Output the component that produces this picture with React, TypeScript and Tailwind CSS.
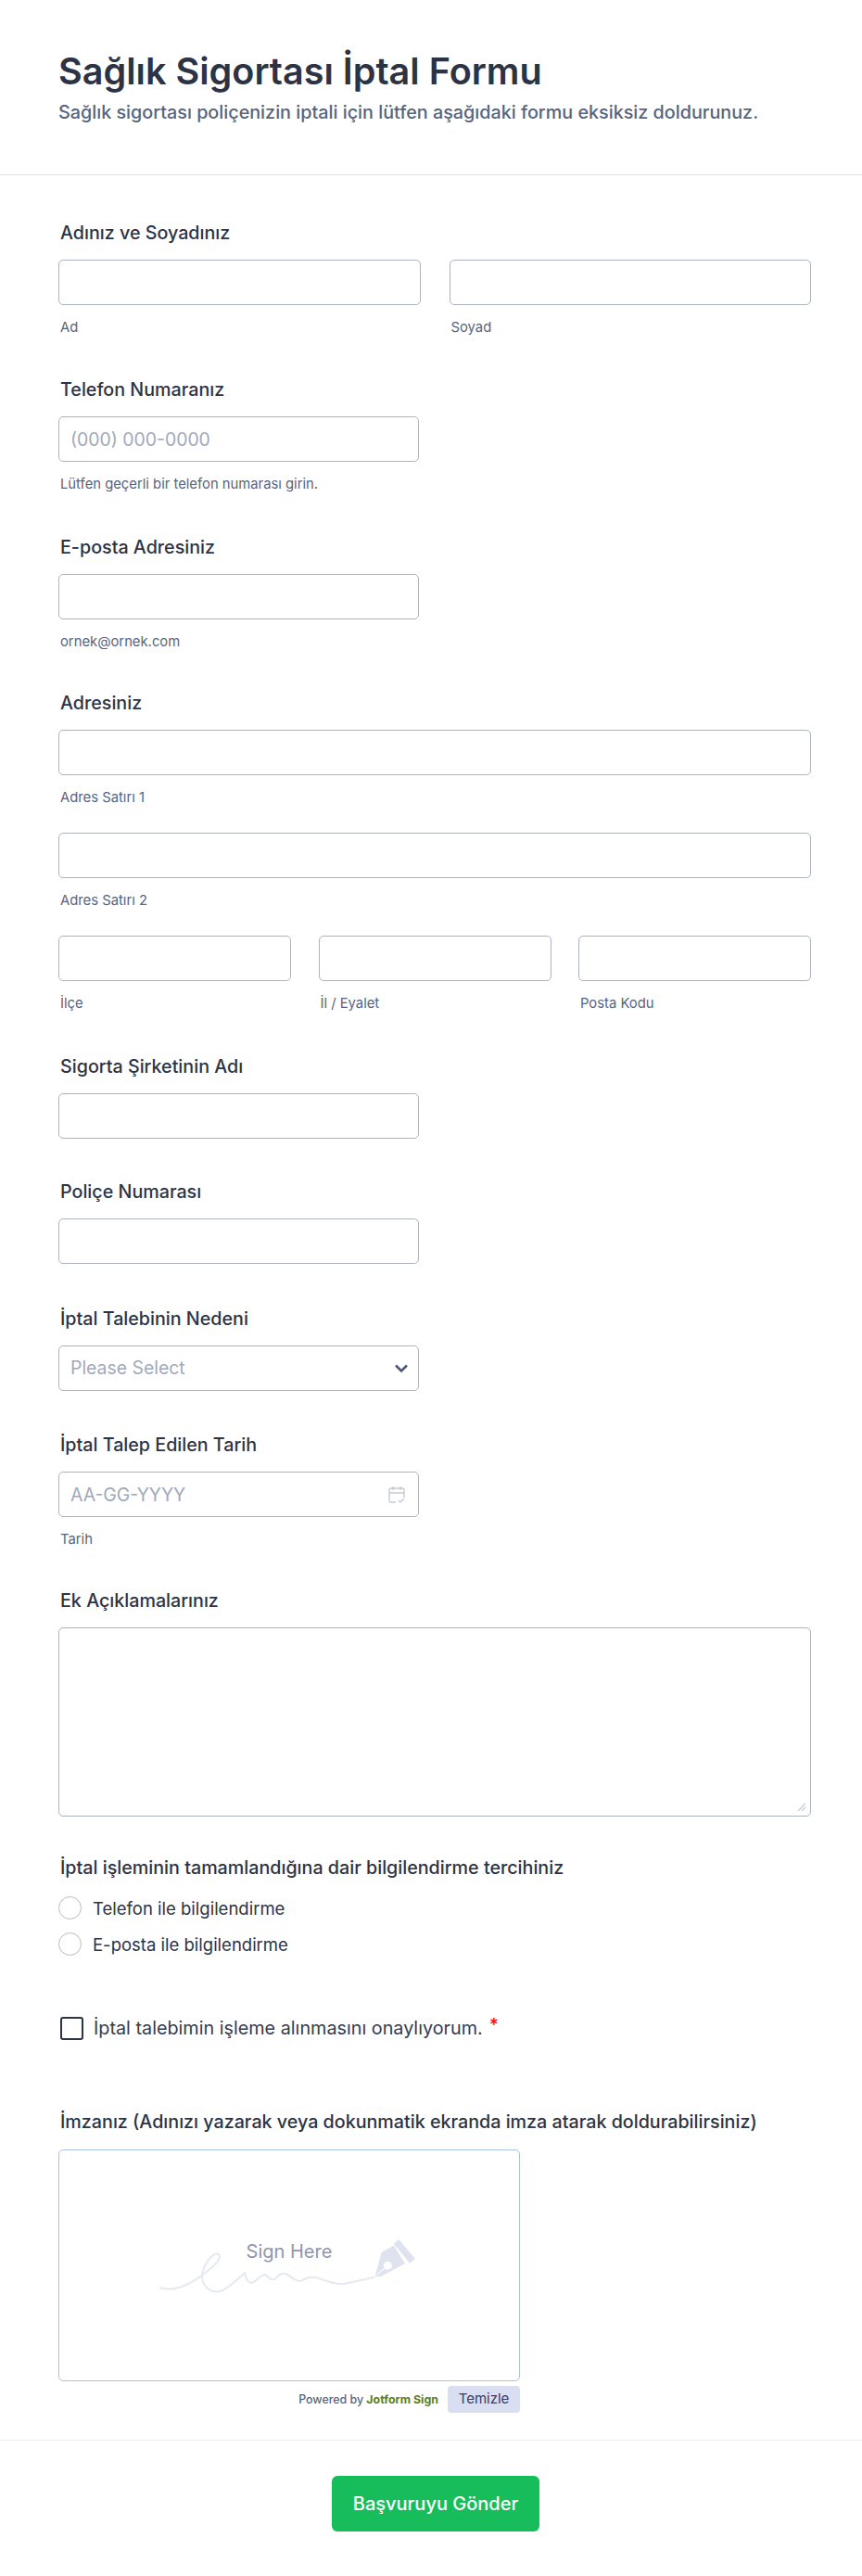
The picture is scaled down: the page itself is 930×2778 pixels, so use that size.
const labelCls = "block pl-[2px] text-[19.7px] leading-[20px] font-medium text-[#2c3345]";
const inputCls = "block h-[49px] w-full rounded-[5px] border border-[#aeb3c2] bg-white px-3 text-[19.4px] text-[#2c3345] placeholder:text-[#a0a9bb]";
const subCls = "mt-[15px] block pl-[2px] text-[14.8px] leading-[18px] text-[#57647e]";

function Label({ children }: { children: React.ReactNode }) {
  return <label className={labelCls}>{children}</label>;
}

function Sub({ children }: { children: React.ReactNode }) {
  return <span className={subCls}>{children}</span>;
}

function Input({ placeholder }: { placeholder?: string }) {
  return <input className={inputCls} placeholder={placeholder} />;
}

function Radio({ text }: { text: string }) {
  return (
    <div className="flex h-[39px] items-center gap-[12px]">
      <span className="h-[25px] w-[25px] rounded-full border border-[#b8bcc8] bg-white" />
      <span className="text-[18.5px] leading-[20px] text-[#2c3345]">{text}</span>
    </div>
  );
}

export default function App() {
  return (
    <div className="min-h-[2778px] w-[930px] bg-white font-['Inter',sans-serif] text-[#2c3345]">
      <header className="h-[189px] border-b border-[#dfe1e9] pl-[63px] pt-[52px]">
        <h1 className="text-[39.6px] leading-[50px] font-semibold text-[#2c3345]">Sağlık Sigortası İptal Formu</h1>
        <p className="mt-[7px] text-[19.75px] leading-[24px] font-medium text-[#57647e]">
          Sağlık sigortası poliçenizin iptali için lütfen aşağıdaki formu eksiksiz doldurunuz.
        </p>
      </header>

      <main className="pl-[63px] pr-[55px] pt-[52px]">
        <section>
          <Label>Adınız ve Soyadınız</Label>
          <div className="mt-[19px] grid grid-cols-2 gap-[31px]">
            <div>
              <Input />
              <Sub>Ad</Sub>
            </div>
            <div>
              <Input />
              <Sub>Soyad</Sub>
            </div>
          </div>
        </section>

        <section className="mt-[48px] w-[389px]">
          <Label>Telefon Numaranız</Label>
          <div className="mt-[19px]">
            <Input placeholder="(000) 000-0000" />
            <Sub>Lütfen geçerli bir telefon numarası girin.</Sub>
          </div>
        </section>

        <section className="mt-[49px] w-[389px]">
          <Label>E-posta Adresiniz</Label>
          <div className="mt-[19px]">
            <Input />
            <Sub>ornek@ornek.com</Sub>
          </div>
        </section>

        <section className="mt-[47px]">
          <Label>Adresiniz</Label>
          <div className="mt-[19px]">
            <Input />
            <Sub>Adres Satırı 1</Sub>
          </div>
          <div className="mt-[29px]">
            <Input />
            <Sub>Adres Satırı 2</Sub>
          </div>
          <div className="mt-[29px] grid grid-cols-3 gap-[29.5px]">
            <div>
              <Input />
              <Sub>İlçe</Sub>
            </div>
            <div>
              <Input />
              <Sub>İl / Eyalet</Sub>
            </div>
            <div>
              <Input />
              <Sub>Posta Kodu</Sub>
            </div>
          </div>
        </section>

        <section className="mt-[49px] w-[389px]">
          <Label>Sigorta Şirketinin Adı</Label>
          <div className="mt-[19px]">
            <Input />
          </div>
        </section>

        <section className="mt-[47px] w-[389px]">
          <Label>Poliçe Numarası</Label>
          <div className="mt-[19px]">
            <Input />
          </div>
        </section>

        <section className="mt-[49px] w-[389px]">
          <Label>İptal Talebinin Nedeni</Label>
          <div className="relative mt-[19px]">
            <div className="flex h-[49px] items-center rounded-[5px] border border-[#aeb3c2] bg-white px-3 text-[19.4px] text-[#a0a9bb]">
              Please Select
            </div>
            <svg className="absolute top-[20px] right-[12px]" width="14" height="10" viewBox="0 0 14 10" fill="none">
              <path d="M1 1.5 7 7.5 13 1.5" stroke="#4b5675" strokeWidth="2.5" />
            </svg>
          </div>
        </section>

        <section className="mt-[48px] w-[389px]">
          <Label>İptal Talep Edilen Tarih</Label>
          <div className="relative mt-[19px]">
            <Input placeholder="AA-GG-YYYY" />
            <svg className="absolute top-[15px] right-[15px]" width="18" height="20" viewBox="0 0 18 20" fill="none" stroke="#c3cad8" strokeWidth="1.4">
              <path d="M8 18H3a2 2 0 0 1-2-2V5a2 2 0 0 1 2-2h12a2 2 0 0 1 2 2v8" />
              <path d="M1 8h16M5 1v4M13 1v4" />
              <path d="m11 16 2 2 4-4" />
            </svg>
          </div>
          <Sub>Tarih</Sub>
        </section>

        <section className="mt-[47px]">
          <Label>Ek Açıklamalarınız</Label>
          <div className="relative mt-[19px]">
            <textarea className="block h-[204px] w-full resize-none rounded-[5px] border border-[#aeb3c2] bg-white" />
            <svg className="absolute right-[6px] bottom-[6px]" width="9" height="9" viewBox="0 0 9 9" fill="none" stroke="#c3c7d1" strokeWidth="1.2">
              <path d="M1 9 9 1M5 9 9 5" />
            </svg>
          </div>
        </section>

        <section className="mt-[45px]">
          <Label>İptal işleminin tamamlandığına dair bilgilendirme tercihiniz</Label>
          <div className="mt-[14px]">
            <Radio text="Telefon ile bilgilendirme" />
            <Radio text="E-posta ile bilgilendirme" />
          </div>
        </section>

        <section className="mt-[58px] flex items-center pl-[2px]">
          <span className="h-[25px] w-[25px] rounded-[3px] border-2 border-[#2c3345] bg-white" />
          <span className="ml-[11px] text-[19.8px] leading-[20px] text-[#343c50]">İptal talebimin işleme alınmasını onaylıyorum.</span>
          <span className="mb-[6px] ml-[7px] text-[19px] leading-[20px] font-semibold text-[#f5121d]">*</span>
        </section>

        <section className="mt-[78px]">
          <Label>İmzanız (Adınızı yazarak veya dokunmatik ekranda imza atarak doldurabilirsiniz)</Label>
          <div className="mt-[20px] w-[498px]">
            <div className="relative h-[250px] rounded-[5px] border border-[#a9c2e6] bg-white">
              <span className="absolute top-[97px] left-0 w-full text-center text-[20px] leading-[24px] text-[#8f96b0]">Sign Here</span>
              {/* signature line and nib, coordinates taken from the reference crop */}
              <svg className="absolute top-[95px] left-[103px]" width="284" height="60" viewBox="370 370 825 177" fill="none">
                <path
                  d="M378 527C420 540 470 520 510 490C550 460 575 440 568 422C555 410 525 440 515 480C510 520 540 545 570 538C600 530 630 495 650 480C655 500 660 515 675 510C690 505 700 485 715 485C725 490 730 505 745 500C755 490 765 478 780 482C800 490 810 510 830 505C845 495 860 490 880 495C900 500 925 515 960 515C990 512 1030 500 1062 493"
                  stroke="#e6e9f2"
                  strokeWidth="6"
                />
                <path d="M1065 490 1085 414 1124 392 1160 450 1082 492Z" fill="#dfe3ef" />
                <path d="M1132 380 1184 442" stroke="#dfe3ef" strokeWidth="22" />
                <circle cx="1105" cy="456" r="13" fill="white" />
                <path d="M1070 487 1100 460" stroke="white" strokeWidth="3" />
              </svg>
            </div>
            <div className="mt-[5px] flex items-center justify-end">
              <span className="mr-[10px] text-[12.4px] leading-[16px] font-medium text-[#57647e]">
                Powered by <span className="font-bold text-[#5a7f1c]">Jotform Sign</span>
              </span>
              <button className="h-[29px] w-[78px] rounded-[4px] bg-[#dadef3] text-[15px] text-[#343c6a]">Temizle</button>
            </div>
          </div>
        </section>
      </main>

      <footer className="mt-[29px] flex justify-center border-t border-[#eceef4] pl-[10px] pt-[38px]">
        <button className="h-[60px] w-[224px] rounded-[6px] bg-[#18bd5b] text-[20px] font-medium text-white">Başvuruyu Gönder</button>
      </footer>
    </div>
  );
}
